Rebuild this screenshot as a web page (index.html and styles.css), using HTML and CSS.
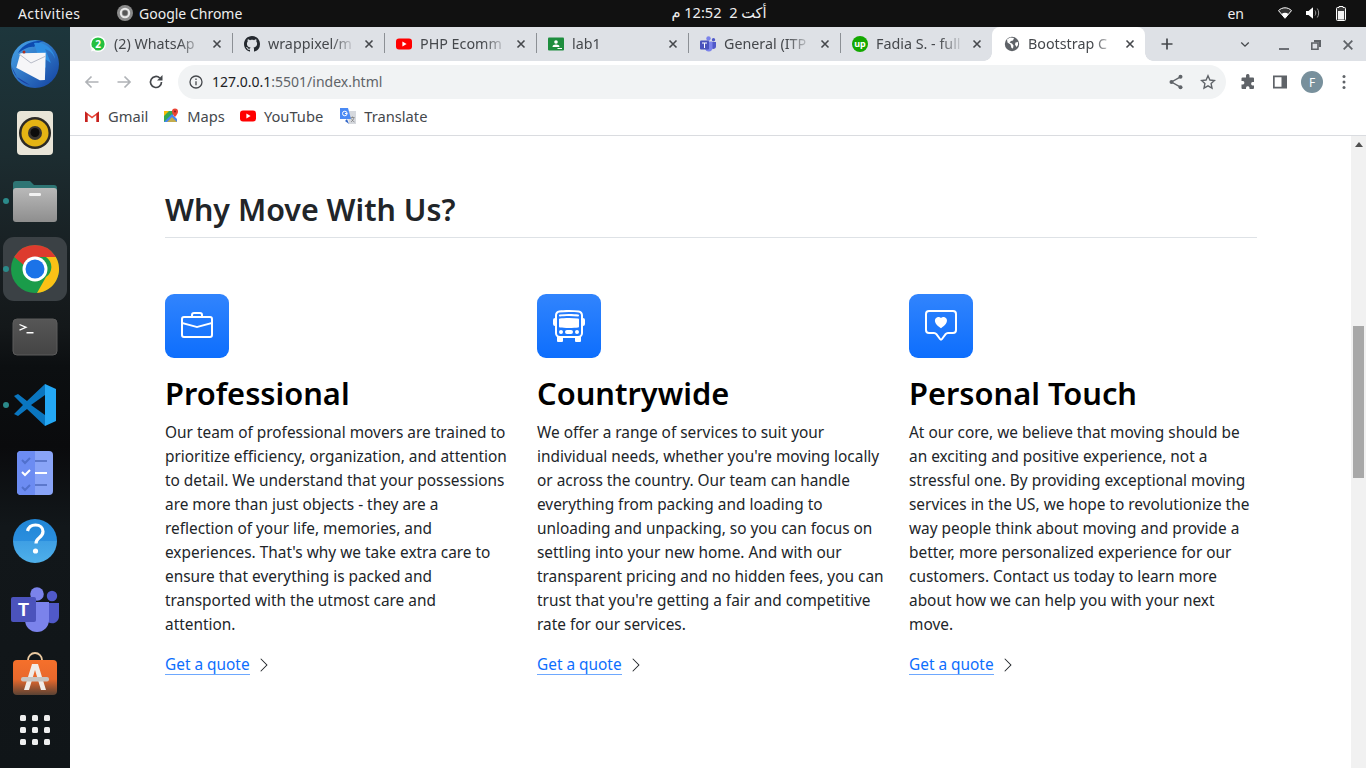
FILE: index.html
```html
<!DOCTYPE html>
<html lang="en">
<head>
<meta charset="utf-8">
<title>Bootstrap Carousel</title>
<link rel="stylesheet" href="styles.css">
</head>
<body>
<header class="topbar">
  <span class="activities">Activities</span>
  <span class="appname">
    <svg class="ic16" viewBox="0 0 16 16"><circle cx="8" cy="8" r="8" fill="#8a8a8a"/><circle cx="8" cy="8" r="4.200" fill="none" stroke="#e8e8e8" stroke-width="2"/><circle cx="8" cy="8" r="2.400" fill="#555"/></svg>
    Google Chrome
  </span>
  <span class="clock" dir="rtl">أكت 2&nbsp;&nbsp;12:52 م</span>
  <span class="lang">en</span>
  <span class="tray">
    <svg class="wifi" viewBox="0 0 14 12"><path d="M7 11.300 .5 3.600C2.200 1.900 4.500 .8 7 .8s4.800 1.100 6.500 2.800z" fill="#333" stroke="#fff" stroke-width="1"/><path d="M7 11 3.600 7C4.600 6.200 5.700 5.800 7 5.800s2.400.4 3.400 1.200z" fill="#fff"/></svg>
    <svg class="sound" viewBox="0 0 14 12"><path d="M0 4h2.500L7 .2v11.600L2.500 8H0z" fill="#fff"/><path d="M9 3.500c1 1.500 1 3.500 0 5M11.300 1.500c1.800 2.500 1.800 6.500 0 9" fill="none" stroke="#999" stroke-width="1"/></svg>
    <svg class="battery" viewBox="0 0 10 15"><path d="M3 .5h4v1h1.500a1 1 0 0 1 1 1v11a1 1 0 0 1-1 1h-7a1 1 0 0 1-1-1v-11a1 1 0 0 1 1-1H3z" fill="#3a3a3a" stroke="#fff" stroke-width="1"/><rect x="2" y="5" width="6" height="8.500" fill="#f4f4f4"/></svg>
  </span>
</header>

<div class="desktop">
  <nav class="dock">
    <div class="dock-item">
      <svg class="dock-svg" viewBox="0 0 70 68"><defs><linearGradient id="tb" x1="0" y1="0" x2="1" y2="1"><stop offset="0" stop-color="#4aa8ea"/><stop offset="1" stop-color="#123f9e"/></linearGradient></defs><circle cx="35" cy="33" r="24" fill="url(#tb)"/><path d="M18 22c5-9 16-13 26-12-5 1-8 3-10 6-5-1-11 3-16 6z" fill="#0d4bb0"/><path d="M34 12c10-2 20 6 21 16-2-6-6-9-10-10l6 14-6-4 1 9-6-6z" fill="#2f8fe2"/><path d="M19 24 44 20l3 27-5 1-25-9z" fill="#f6f6f8" transform="rotate(8 32 33)"/><path d="M19 23 31 32l15-7" fill="none" stroke="#b8bcc8" stroke-width="1"/><circle cx="24" cy="21" r="1.500" fill="#b03020"/><path d="M12 36c2 9 9 16 18 18l-13-8z" fill="#1c3fa0"/></svg>
    </div>
    <div class="dock-item">
      <svg class="dock-svg" viewBox="0 0 70 68"><rect x="17" y="12" width="36" height="44" rx="4" fill="#e9e5d8"/><circle cx="35" cy="34" r="16" fill="#2c2a26"/><circle cx="35" cy="34" r="13.500" fill="#e5b414"/><circle cx="35" cy="34" r="7" fill="#3a3630"/><circle cx="35" cy="33.500" r="4.500" fill="#0c0c0c"/></svg>
    </div>
    <div class="dock-item">
      <span class="running"></span>
      <svg class="dock-svg" viewBox="0 0 70 68"><defs><linearGradient id="fo" x1="0" y1="0" x2="0" y2="1"><stop offset="0" stop-color="#b9b9b9"/><stop offset="1" stop-color="#8e8e8e"/></linearGradient></defs><path d="M13 17a3 3 0 0 1 3-3h14l4 4h20a3 3 0 0 1 3 3v8H13z" fill="#2e7574"/><rect x="13" y="21" width="44" height="34" rx="3" fill="url(#fo)"/><rect x="29" y="26" width="12" height="3" rx="1.200" fill="#f2f2f2"/></svg>
    </div>
    <div class="dock-item">
      <span class="chrome-active"></span>
      <span class="running"></span>
      <svg class="dock-svg" viewBox="0 0 70 68"><circle cx="35" cy="34" r="24" fill="#1a9c4a"/><path d="M35 10a24 24 0 0 1 20.800 12H35a12 12 0 0 0-11.300 8L14.200 22A24 24 0 0 1 35 10z" fill="#dd3b2e"/><path d="M55.800 22A24 24 0 0 1 37 58l9-16a12 12 0 0 0 0-20z" fill="#fbc116"/><circle cx="35" cy="34" r="12.500" fill="#fff"/><circle cx="35" cy="34" r="9.500" fill="#1b73e8"/></svg>
    </div>
    <div class="dock-item">
      <svg class="dock-svg" viewBox="0 0 70 68"><defs><linearGradient id="te" x1="0" y1="0" x2="0" y2="1"><stop offset="0" stop-color="#565656"/><stop offset="1" stop-color="#444"/></linearGradient></defs><rect x="13" y="16" width="44" height="36" rx="4" fill="url(#te)" stroke="#5c5c5c"/><path d="M19.500 21.500l6.500 2.800-6.500 2.800" fill="none" stroke="#fff" stroke-width="1.300"/><rect x="26.500" y="29" width="7" height="1.500" fill="#fff"/></svg>
    </div>
    <div class="dock-item">
      <span class="running"></span>
      <svg class="dock-svg" viewBox="0 0 70 68"><path d="M45 13 27 30l-9-7-4 2 9 9-9 9 4 2 9-7 18 17 1-3V16z" fill="#0a76c0"/><path d="M45 24v20L31 34z" fill="#0c0f12"/><path d="M45 13l11 5v32l-11 5z" fill="#24a8f5"/></svg>
    </div>
    <div class="dock-item">
      <svg class="dock-svg" viewBox="0 0 70 68"><rect x="17" y="12" width="36" height="44" rx="4" fill="#89a4f7"/><path d="M17 16a4 4 0 0 1 4-4h14v44H21a4 4 0 0 1-4-4z" fill="#6c8cf2"/><path d="M22 21l3 3 5-5M22 48l3 3 5-5" fill="none" stroke="#5070cc" stroke-width="2"/><path d="M22 33l3 3 5-5" fill="none" stroke="#fff" stroke-width="2"/><path d="M35 22h12M35 46h12" stroke="#5c78cc" stroke-width="2"/><path d="M35 34h12" stroke="#fff" stroke-width="2"/></svg>
    </div>
    <div class="dock-item">
      <svg class="dock-svg" viewBox="0 0 70 68"><defs><linearGradient id="he" x1="0" y1="0" x2="0" y2="1"><stop offset="0" stop-color="#2186d6"/><stop offset=".5" stop-color="#2a8ede"/><stop offset=".5" stop-color="#3e9fe4"/><stop offset="1" stop-color="#4fb0ea"/></linearGradient></defs><circle cx="35" cy="34" r="22" fill="url(#he)"/><path d="M27.500 24c1-4 4-6 8-6 4.500 0 7.500 2.800 7.500 6.500 0 3.500-2 5-4 6.500-2 1.500-3 2.800-3 5.500" fill="none" stroke="#fff" stroke-width="3.200"/><circle cx="35.500" cy="44" r="2.600" fill="#fff"/></svg>
    </div>
    <div class="dock-item">
      <svg class="dock-svg" viewBox="0 0 70 68"><circle cx="37" cy="19" r="6.800" fill="#7b83eb"/><circle cx="52" cy="21" r="5.200" fill="#5059c9"/><path d="M46 28h13v13a7 7 0 0 1-11 6z" fill="#5059c9"/><path d="M25 27h24v18a12 12 0 0 1-24 0z" fill="#7b83eb"/><rect x="11" y="22" width="25" height="25" rx="2" fill="#4b53bc"/><text class="teams-t" x="23.500" y="41">T</text></svg>
    </div>
    <div class="dock-item">
      <svg class="dock-svg" viewBox="0 0 70 68"><defs><linearGradient id="sw" x1="0" y1="0" x2="0" y2="1"><stop offset="0" stop-color="#f5702b"/><stop offset=".55" stop-color="#e8682c"/><stop offset="1" stop-color="#5a4234"/></linearGradient></defs><path d="M28 18v-1a7 7 0 0 1 14 0v1" fill="none" stroke="#eac9a0" stroke-width="1.800"/><rect x="13" y="17" width="44" height="35" rx="4" fill="url(#sw)"/><path d="M32 21h6l8 26h-5l-6-20-6 20h-5z" fill="#f0ece8"/><rect x="21" y="34" width="28" height="4.500" rx="2" fill="#c8c4c0"/></svg>
    </div>
    <div class="dock-grid">
      <i></i><i></i><i></i><i></i><i></i><i></i><i></i><i></i><i></i>
    </div>
  </nav>

  <div class="browser">
    <div class="tabstrip">
      <div class="tab">
        <svg class="ic16" viewBox="0 0 16 16"><circle cx="8" cy="8" r="8" fill="#fff"/><circle cx="8" cy="8" r="6.600" fill="#25c03f"/><path d="M1 15.500 2.500 11l3 3z" fill="#fff"/><text class="wa-n" x="8" y="11.500">2</text></svg>
        <span class="tab-title">(2) WhatsAp</span>
        <svg class="tab-x" viewBox="0 0 10 10"><path d="M1.500 1.500l7 7M8.500 1.500l-7 7"/></svg>
      </div>
      <div class="tab">
        <svg class="ic16" viewBox="0 0 16 16"><path fill="#24292f" d="M8 0C3.580 0 0 3.580 0 8c0 3.540 2.290 6.530 5.470 7.590.4.070.55-.17.55-.38 0-.19-.01-.82-.01-1.490-2.010.37-2.530-.49-2.690-.94-.09-.23-.48-.94-.82-1.130-.28-.15-.68-.52-.01-.53.63-.01 1.080.58 1.230.82.720 1.210 1.870.87 2.330.66.070-.52.280-.87.510-1.070-1.780-.2-3.640-.89-3.640-3.950 0-.87.31-1.590.82-2.150-.08-.2-.36-1.020.08-2.120 0 0 .67-.21 2.200.82.640-.18 1.320-.27 2-.27.68 0 1.360.09 2 .27 1.530-1.040 2.200-.82 2.200-.82.440 1.100.160 1.920.080 2.120.510.560.820 1.270.820 2.150 0 3.070-1.870 3.750-3.650 3.950.290.250.540.730.540 1.480 0 1.070-.01 1.930-.01 2.200 0 .21.150.46.550.38A8.013 8.013 0 0016 8c0-4.420-3.580-8-8-8z"/></svg>
        <span class="tab-title">wrappixel/m</span>
        <svg class="tab-x" viewBox="0 0 10 10"><path d="M1.500 1.500l7 7M8.500 1.500l-7 7"/></svg>
      </div>
      <div class="tab">
        <svg class="ic16" viewBox="0 0 16 16"><rect y="2.500" width="16" height="11" rx="3" fill="#f00"/><path d="M6.400 5.500v5L10.600 8z" fill="#fff"/></svg>
        <span class="tab-title">PHP Ecomm</span>
        <svg class="tab-x" viewBox="0 0 10 10"><path d="M1.500 1.500l7 7M8.500 1.500l-7 7"/></svg>
      </div>
      <div class="tab">
        <svg class="ic16" viewBox="0 0 16 16"><rect y="1.500" width="16" height="13" rx="1" fill="#1e8e3e"/><circle cx="8" cy="6" r="1.800" fill="#fff"/><path d="M4.500 11c0-1.800 1.500-2.500 3.500-2.500s3.500.7 3.500 2.500z" fill="#fff"/><rect x="9.500" y="12" width="4.500" height="1" fill="#fff"/></svg>
        <span class="tab-title">lab1</span>
        <svg class="tab-x" viewBox="0 0 10 10"><path d="M1.500 1.500l7 7M8.500 1.500l-7 7"/></svg>
      </div>
      <div class="tab">
        <svg class="ic16" viewBox="0 0 16 16"><circle cx="8.500" cy="2.500" r="2.200" fill="#7b83eb"/><circle cx="13.500" cy="3.800" r="1.700" fill="#5059c9"/><path d="M11.500 6H16v4.500a2.500 2.500 0 0 1-4.500 1.500z" fill="#5059c9"/><path d="M5 5.500h7.500v6.500a3.800 3.800 0 0 1-7.500.5z" fill="#7b83eb"/><rect y="4.500" width="9" height="9" rx="1" fill="#4b53bc"/><path d="M2 6.500h5v1H5v4.500H4V7.500H2z" fill="#fff"/></svg>
        <span class="tab-title">General (ITP</span>
        <svg class="tab-x" viewBox="0 0 10 10"><path d="M1.500 1.500l7 7M8.500 1.500l-7 7"/></svg>
      </div>
      <div class="tab">
        <svg class="ic16" viewBox="0 0 16 16"><circle cx="8" cy="8" r="8" fill="#14a800"/><text class="up-t" x="8" y="10.500">up</text></svg>
        <span class="tab-title">Fadia S. - full</span>
        <svg class="tab-x" viewBox="0 0 10 10"><path d="M1.500 1.500l7 7M8.500 1.500l-7 7"/></svg>
      </div>
      <div class="tab tab-active">
        <svg class="ic16" viewBox="0 0 16 16"><circle cx="8" cy="8" r="7.200" fill="#5f6368"/><path d="M6 1.500 3 3.500l.5 3 3 2 1 3.500 1.500.5.500-3L8 7.500 5.500 6.500 7 5l2-.5 1-2.500zM14 6l-2.500.5-.5 2 1.500 2.500 1.500-2z" fill="#fff"/></svg>
        <span class="tab-title">Bootstrap C</span>
        <svg class="tab-x" viewBox="0 0 10 10"><path d="M1.500 1.500l7 7M8.500 1.500l-7 7"/></svg>
      </div>
      <svg class="newtab" viewBox="0 0 12 12"><path d="M6 .5v11M.5 6h11"/></svg>
      <span class="strip-space"></span>
      <svg class="win-chev" viewBox="0 0 12 8"><path d="M1.500 1.500 6 6l4.500-4.500"/></svg>
      <div class="winctl">
        <svg class="win-btn" viewBox="0 0 10 10"><path d="M0 9h10" stroke-width="1.800"/></svg>
        <svg class="win-btn" viewBox="0 0 10 10"><path d="M.8 3h6.200v6.200H.8z" stroke-width="1.600"/><path class="solid" d="M3 0h7v7H7.800V2.200H3z"/></svg>
        <svg class="win-btn" viewBox="0 0 10 10"><path d="M.7 .7l8.600 8.600M9.300 .7 .7 9.300" stroke-width="1.800"/></svg>
      </div>
    </div>

    <div class="toolbar">
      <svg class="nav-ic dim" viewBox="0 0 16 16"><path d="M14.500 8H2M7.500 2.500 2 8l5.500 5.500"/></svg>
      <svg class="nav-ic dim" viewBox="0 0 16 16"><path d="M1.500 8H14M8.500 2.500 14 8l-5.500 5.500"/></svg>
      <svg class="nav-ic" viewBox="0 0 16 16"><path d="M13.500 8a5.500 5.500 0 1 1-1.700-4"/><path class="fill" d="M14.500 1v5.500H9z"/></svg>
      <div class="omnibox">
        <svg class="info" viewBox="0 0 14 14"><circle cx="7" cy="7" r="6"/><path d="M7 6.200v4M7 3.500v1.500"/></svg>
        <span class="url"><b>127.0.0.1</b>:5501/index.html</span>
        <span class="omni-space"></span>
        <svg class="omni-ic" viewBox="0 0 16 16"><path class="line" d="M12.500 2.800 3.500 8l9 5.200"/><circle cx="12.500" cy="2.800" r="2"/><circle cx="3.500" cy="8" r="2"/><circle cx="12.500" cy="13.200" r="2"/></svg>
        <svg class="omni-ic" viewBox="0 0 16 16"><path class="line" d="m8 1.800 1.900 4.200 4.600.5-3.400 3.100.9 4.500L8 11.800l-4 2.300.9-4.500L1.500 6.500 6.100 6z"/></svg>
      </div>
      <svg class="tool-ic ext" viewBox="0 0 16 16"><path d="M6 1.500a1.800 1.800 0 0 1 3.500 0V3.500h3.500a1 1 0 0 1 1 1V8h-1.500a1.800 1.800 0 0 0 0 3.500H14V14a1 1 0 0 1-1 1H9.500v-1.300a1.800 1.800 0 0 0-3.500 0V15H2.500a1 1 0 0 1-1-1V10.500H3a1.800 1.800 0 0 0 0-3.500H1.500V4.500a1 1 0 0 1 1-1H6z"/></svg>
      <svg class="tool-ic" viewBox="0 0 16 16"><path fill-rule="evenodd" d="M1 1.500h14v13H1zM2.700 3.200v9.600h6.800V3.200z"/></svg>
      <span class="avatar">F</span>
      <svg class="tool-ic menu" viewBox="0 0 4 16"><circle cx="2" cy="2.500" r="1.500"/><circle cx="2" cy="8" r="1.500"/><circle cx="2" cy="13.500" r="1.500"/></svg>
    </div>

    <div class="bookmarks">
      <span class="bm">
        <svg class="ic16" viewBox="0 0 16 16"><path d="M1 3.500 8 8.500l7-5V14h-2.500V7L8 10.500 3.500 7v7H1z" fill="#ea4335"/><path d="M1 14V3.500l2.500 2V14z" fill="#c5221f"/><path d="M12.500 14V5.500l2.500-2V14z" fill="#c5221f"/></svg>
        Gmail
      </span>
      <span class="bm">
        <svg class="ic16" viewBox="0 0 16 16"><path d="M1 3h9v11H1z" fill="#34a853"/><path d="M1 14 9 6l5 5v3z" fill="#4285f4"/><path d="M1 3h5L1 8z" fill="#fbbc04"/><path d="M4 14l5-5 5 5z" fill="#fbbc04" opacity=".7"/><path d="M12 .5a3 3 0 0 1 3 3C15 6 12 9 12 9S9 6 9 3.500a3 3 0 0 1 3-3z" fill="#ea4335"/><circle cx="12" cy="3.500" r="1" fill="#8a1c14"/></svg>
        Maps
      </span>
      <span class="bm">
        <svg class="ic16" viewBox="0 0 16 16"><rect y="2.500" width="16" height="11" rx="3" fill="#f00"/><path d="M6.400 5.500v5L10.600 8z" fill="#fff"/></svg>
        YouTube
      </span>
      <span class="bm">
        <svg class="ic16" viewBox="0 0 16 16"><path d="M7 3h9v13H9z" fill="#d6d9de"/><path d="M0 0h8l3 11H0z" fill="#4a8af4"/><path d="M5 13 9 16l-2-5z" fill="#3367c8"/><circle cx="4.800" cy="5.500" r="2.300" fill="none" stroke="#fff" stroke-width="1"/><path d="M5 5.500h2.200" stroke="#fff"/><path d="M10.500 9.500h4M12.500 8.500v1M11 14c1.500-1 2.500-2.500 3-4.500M11.500 10.500c.5 1.500 1.500 3 3 3.500" stroke="#777" stroke-width=".7" fill="none"/></svg>
        Translate
      </span>
    </div>

    <div class="viewport">
      <main class="page">
        <h2 class="section-title">Why Move With Us?</h2>
        <div class="features">
          <article class="feature">
            <div class="feature-icon">
              <svg class="bi" viewBox="0 0 16 16"><path d="M6.500 1A1.500 1.500 0 0 0 5 2.500V3H1.500A1.500 1.500 0 0 0 0 4.500v8A1.500 1.500 0 0 0 1.500 14h13a1.500 1.500 0 0 0 1.500-1.500v-8A1.500 1.500 0 0 0 14.500 3H11v-.5A1.500 1.500 0 0 0 9.500 1h-3zm0 1h3a.5.5 0 0 1 .5.5V3H6v-.5a.5.5 0 0 1 .5-.5zm1.886 6.914L15 7.151V12.500a.5.5 0 0 1-.5.5h-13a.5.5 0 0 1-.5-.5V7.150l6.614 1.764a1.500 1.500 0 0 0 .772 0zM1.500 4h13a.5.5 0 0 1 .5.5v1.616L8.129 7.948a.5.5 0 0 1-.258 0L1 6.116V4.500a.5.5 0 0 1 .5-.5z"/></svg>
            </div>
            <h3>Professional</h3>
            <p>
              <span>Our team of professional movers are trained to</span>
              <span>prioritize efficiency, organization, and attention</span>
              <span>to detail. We understand that your possessions</span>
              <span>are more than just objects - they are a</span>
              <span>reflection of your life, memories, and</span>
              <span>experiences. That's why we take extra care to</span>
              <span>ensure that everything is packed and</span>
              <span>transported with the utmost care and</span>
              <span>attention.</span>
            </p>
            <div class="quote"><a href="#">Get a quote</a><svg class="chev" viewBox="0 0 16 16"><path d="M4.646 1.646a.5.5 0 0 1 .708 0l6 6a.5.5 0 0 1 0 .708l-6 6a.5.5 0 0 1-.708-.708L10.293 8 4.646 2.354a.5.5 0 0 1 0-.708z"/></svg></div>
          </article>
          <article class="feature">
            <div class="feature-icon">
              <svg class="bi" viewBox="0 0 16 16"><path d="M5 11a1 1 0 1 1-2 0 1 1 0 0 1 2 0Zm8 0a1 1 0 1 1-2 0 1 1 0 0 1 2 0Zm-6-1a1 1 0 1 0 0 2h2a1 1 0 1 0 0-2H7Zm1-6c-1.876 0-3.426.109-4.552.226A.5.5 0 0 0 3 4.723v3.554a.5.5 0 0 0 .448.497C4.574 8.891 6.124 9 8 9c1.876 0 3.426-.109 4.552-.226A.5.5 0 0 0 13 8.277V4.723a.5.5 0 0 0-.448-.497A44.303 44.303 0 0 0 8 4Zm0-1c-1.837 0-3.353.107-4.448.22a.5.5 0 1 1-.104-.994A44.304 44.304 0 0 1 8 2c1.876 0 3.426.109 4.552.226a.5.5 0 1 1-.104.994A43.306 43.306 0 0 0 8 3ZM15 8a1 1 0 0 0 1-1V5a1 1 0 0 0-1-1V2.640c0-1.188-.845-2.232-2.064-2.372A43.610 43.610 0 0 0 8 0C5.900 0 4.208.136 3.064.268 1.845.408 1 1.452 1 2.640V4a1 1 0 0 0-1 1v2a1 1 0 0 0 1 1v3.500c0 .818.393 1.544 1 2v2a.5.5 0 0 0 .5.5h2a.5.5 0 0 0 .5-.5V14h6v1.500a.5.5 0 0 0 .5.5h2a.5.5 0 0 0 .5-.5v-2c.607-.456 1-1.182 1-2V8ZM8 1c2.056 0 3.710.134 4.822.261.676.078 1.178.660 1.178 1.379v8.860a1.500 1.500 0 0 1-1.500 1.500h-9A1.500 1.500 0 0 1 2 11.500V2.640c0-.720.502-1.301 1.178-1.379A42.611 42.611 0 0 1 8 1Z"/></svg>
            </div>
            <h3>Countrywide</h3>
            <p>
              <span>We offer a range of services to suit your</span>
              <span>individual needs, whether you're moving locally</span>
              <span>or across the country. Our team can handle</span>
              <span>everything from packing and loading to</span>
              <span>unloading and unpacking, so you can focus on</span>
              <span>settling into your new home. And with our</span>
              <span>transparent pricing and no hidden fees, you can</span>
              <span>trust that you're getting a fair and competitive</span>
              <span>rate for our services.</span>
            </p>
            <div class="quote"><a href="#">Get a quote</a><svg class="chev" viewBox="0 0 16 16"><path d="M4.646 1.646a.5.5 0 0 1 .708 0l6 6a.5.5 0 0 1 0 .708l-6 6a.5.5 0 0 1-.708-.708L10.293 8 4.646 2.354a.5.5 0 0 1 0-.708z"/></svg></div>
          </article>
          <article class="feature">
            <div class="feature-icon">
              <svg class="bi" viewBox="0 0 16 16"><path d="M14 1a1 1 0 0 1 1 1v8a1 1 0 0 1-1 1h-2.500a2 2 0 0 0-1.600.8L8 14.333 6.100 11.800a2 2 0 0 0-1.600-.8H2a1 1 0 0 1-1-1V2a1 1 0 0 1 1-1h12ZM2 0a2 2 0 0 0-2 2v8a2 2 0 0 0 2 2h2.500a1 1 0 0 1 .8.4l1.900 2.533a1 1 0 0 0 1.600 0l1.900-2.533a1 1 0 0 1 .8-.4H14a2 2 0 0 0 2-2V2a2 2 0 0 0-2-2H2Z"/><path d="M8 3.993c1.664-1.711 5.825 1.283 0 5.132-5.825-3.850-1.664-6.843 0-5.132Z"/></svg>
            </div>
            <h3>Personal Touch</h3>
            <p>
              <span>At our core, we believe that moving should be</span>
              <span>an exciting and positive experience, not a</span>
              <span>stressful one. By providing exceptional moving</span>
              <span>services in the US, we hope to revolutionize the</span>
              <span>way people think about moving and provide a</span>
              <span>better, more personalized experience for our</span>
              <span>customers. Contact us today to learn more</span>
              <span>about how we can help you with your next</span>
              <span>move.</span>
            </p>
            <div class="quote"><a href="#">Get a quote</a><svg class="chev" viewBox="0 0 16 16"><path d="M4.646 1.646a.5.5 0 0 1 .708 0l6 6a.5.5 0 0 1 0 .708l-6 6a.5.5 0 0 1-.708-.708L10.293 8 4.646 2.354a.5.5 0 0 1 0-.708z"/></svg></div>
          </article>
        </div>
      </main>
      <aside class="scrollbar">
        <span class="sb-up"></span>
        <span class="sb-thumb"></span>
      </aside>
    </div>
  </div>
</div>
</body>
</html>
```
FILE: styles.css
```css
* { box-sizing: border-box; }
html, body { margin: 0; height: 100%; overflow: hidden; }
body {
  width: 1366px;
  height: 768px;
  display: flex;
  flex-direction: column;
  font-family: "Noto Sans", "DejaVu Sans", sans-serif;
  background: #fff;
}
.ic16 { width: 16px; height: 16px; flex: none; }

/* GNOME top bar */
.topbar {
  height: 27px;
  flex: none;
  background: #111;
  color: #eee;
  display: flex;
  align-items: center;
  font-size: 14px;
  padding-bottom: 1px;
  position: relative;
}
.activities { margin-left: 18px; width: 99px; letter-spacing: .4px; }
.appname { display: flex; align-items: center; gap: 6px; }
.clock {
  position: absolute;
  left: 671px;
  top: 2px;
  width: 96px;
  font-size: 14.6px;
  line-height: 20px;
  white-space: nowrap;
  text-align: center;
}
.lang { margin-left: auto; margin-right: 34px; }
.tray { display: flex; align-items: center; margin-right: 20px; }
.wifi { width: 14px; height: 12px; margin-right: 14px; }
.sound { width: 14px; height: 12px; margin-right: 16px; }
.battery { width: 10px; height: 15px; }

/* Dock */
.desktop { flex: 1; display: flex; min-height: 0; }
.dock {
  width: 70px;
  flex: none;
  padding-top: 4px;
  background: linear-gradient(180deg, #1d363c 0, #1c2c30 130px, #181f22 230px, #14181a 300px, #0c0f11 340px, #0a0b0d 420px, #12171a 500px, #101518 741px);
}
.dock-item { height: 68px; position: relative; }
.dock-svg { width: 70px; height: 68px; display: block; position: relative; }
.running {
  position: absolute;
  left: 3px;
  top: 31px;
  width: 6px;
  height: 6px;
  border-radius: 50%;
  background: #2b8a8a;
  z-index: 2;
}
.chrome-active {
  position: absolute;
  left: 3px;
  top: 2px;
  width: 64px;
  height: 64px;
  border-radius: 11px;
  background: #3b4145;
}
.teams-t { font: 700 18px "Liberation Sans", sans-serif; fill: #fff; text-anchor: middle; }
.dock-grid {
  height: 38px;
  display: grid;
  grid-template-columns: repeat(3, 6px);
  grid-auto-rows: 6px;
  gap: 6px;
  justify-content: center;
  align-content: center;
}
.dock-grid i { background: #eee; border-radius: 1.5px; }

/* Chrome */
.browser { flex: 1; display: flex; flex-direction: column; min-width: 0; }
.tabstrip {
  height: 34px;
  flex: none;
  background: #dee1e6;
  display: flex;
  align-items: stretch;
  padding-left: 10px;
  padding-right: 13px;
}
.tab {
  width: 152px;
  flex: none;
  display: flex;
  align-items: center;
  padding: 0 10px 0 12px;
  position: relative;
  font-size: 14.3px;
  color: #45484c;
}
.tab:first-child { padding-left: 10px; }
.tab::after {
  content: "";
  position: absolute;
  right: -1px;
  top: 6px;
  height: 20px;
  width: 1px;
  background: #8c9095;
}
.tab:nth-child(6)::after { display: none; }
.tab-title {
  flex: 1;
  min-width: 0;
  margin: 0 8px 2px;
  overflow: hidden;
  white-space: nowrap;
  -webkit-mask-image: linear-gradient(90deg, #000 72%, transparent 100%);
  mask-image: linear-gradient(90deg, #000 72%, transparent 100%);
}
.tab-x { width: 10px; height: 10px; flex: none; fill: none; stroke: #45484c; stroke-width: 1.6; }
.tab-active { background: #fff; border-radius: 8px 8px 0 0; width: 153px; padding-left: 12px; }
.tab-active::before,
.tab-active::after {
  content: "";
  position: absolute;
  bottom: 0;
  top: auto;
  width: 8px;
  height: 8px;
}
.tab-active::before {
  left: -8px;
  background: radial-gradient(circle at 0 0, transparent 7.5px, #fff 8px);
}
.tab-active::after {
  right: -8px;
  background: radial-gradient(circle at 100% 0, transparent 7.5px, #fff 8px);
}
.newtab { width: 12px; height: 12px; fill: none; stroke: #45484c; stroke-width: 1.7; align-self: center; flex: none; margin-left: 16px; }
.strip-space { flex: 1; }
.win-chev { width: 10px; height: 7px; align-self: center; fill: none; stroke: #45484c; stroke-width: 1.6; flex: none; margin-right: 29px; }
.winctl { display: flex; align-items: center; gap: 22px; }
.win-btn { width: 10px; height: 10px; fill: none; stroke: #5f6368; margin-top: 1px; }
.win-btn .solid { fill: #5f6368; stroke: none; }

.toolbar {
  height: 38px;
  flex: none;
  display: flex;
  align-items: flex-start;
  padding: 4px 0 0 14px;
  background: #fff;
}
.nav-ic { width: 16px; height: 16px; margin: 9px 16px 0 0; fill: none; stroke: #45484c; stroke-width: 1.7; flex: none; }
.nav-ic.dim { stroke: #b0b3b7; }
.nav-ic .fill { fill: #45484c; stroke: none; }
.omnibox {
  width: 1048px;
  height: 34px;
  flex: none;
  margin-left: -2px;
  border-radius: 17px;
  background: #f1f3f4;
  display: flex;
  align-items: center;
  padding: 0 10px 0 11px;
}
.info { width: 14px; height: 14px; fill: none; stroke: #45484c; stroke-width: 1.3; flex: none; }
.url { margin: 0 0 2px 9px; font-size: 14px; color: #5f6368; white-space: nowrap; }
.url b { font-weight: 400; color: #202124; }
.omni-space { flex: 1; }
.omni-ic { width: 16px; height: 16px; fill: #5f6368; flex: none; margin-left: 16px; }
.omni-ic .line { fill: none; stroke: #5f6368; stroke-width: 1.4; }
.tool-ic { width: 16px; height: 16px; fill: #5f6368; flex: none; margin: 9px 0 0 16px; }
.tool-ic.ext { margin-left: 14px; }
.avatar {
  width: 22px;
  height: 22px;
  flex: none;
  margin: 6px 0 0 13px;
  border-radius: 50%;
  background: #78909c;
  color: #fff;
  font-size: 12px;
  display: flex;
  align-items: center;
  justify-content: center;
}
.tool-ic.menu { width: 4px; margin-left: 19px; }

.bookmarks {
  height: 37px;
  flex: none;
  border-bottom: 1px solid #dadce0;
  display: flex;
  align-items: center;
  padding: 0 0 3px 14px;
  font-size: 14.7px;
  color: #45484c;
  gap: 15px;
  background: #fff;
}
.bm { display: flex; align-items: center; gap: 8px; }
.bm:last-child { margin-left: 2px; }

/* Page */
.viewport { flex: 1; display: flex; min-height: 0; }
.page { flex: 1; min-width: 0; padding: 55px 94px 0 95px; color: #212529; }
.section-title {
  margin: 0 0 56px;
  padding: 0 0 8px;
  border-bottom: 1px solid #dee2e6;
  font-size: 30.4px;
  font-weight: 600;
  line-height: 38px;
}
.features { display: grid; grid-template-columns: repeat(3, 348px); column-gap: 24px; }
.feature-icon {
  width: 64px;
  height: 64px;
  margin-bottom: 16px;
  border-radius: 9px;
  background: linear-gradient(180deg, #3184fd, #0d6efd);
  display: flex;
  align-items: center;
  justify-content: center;
}
.bi { width: 32px; height: 32px; fill: #fff; }
.feature h3 {
  margin: 0 0 8px;
  font-size: 30.8px;
  line-height: 39px;
  font-weight: 600;
  color: #000;
}
.feature p {
  margin: 0 0 17px;
  font-size: 15.4px;
  line-height: 24px;
}
.feature p span { display: block; white-space: nowrap; }
.quote { display: flex; align-items: flex-start; font-size: 15.4px; line-height: 24px; margin-top: -1px; }
.quote a { color: #0d6efd; text-decoration: none; border-bottom: 1px solid #6ea8fe; height: 22px; display: block; }
.chev { width: 16px; height: 16px; margin: 4px 0 0 6px; fill: #212529; }

.scrollbar { width: 15px; flex: none; background: #f1f1f1; position: relative; }
.sb-up {
  position: absolute;
  left: 4px;
  top: 6px;
  width: 0;
  height: 0;
  border-left: 4px solid transparent;
  border-right: 4px solid transparent;
  border-bottom: 5px solid #505050;
}
.sb-thumb {
  position: absolute;
  left: 2px;
  top: 190px;
  width: 11px;
  height: 152px;
  background: #a8a8a8;
}
.wa-n { font: 700 10px "Noto Sans", sans-serif; fill: #fff; text-anchor: middle; }
.up-t { font: 700 9px "Noto Sans", sans-serif; fill: #fff; text-anchor: middle; }
```
